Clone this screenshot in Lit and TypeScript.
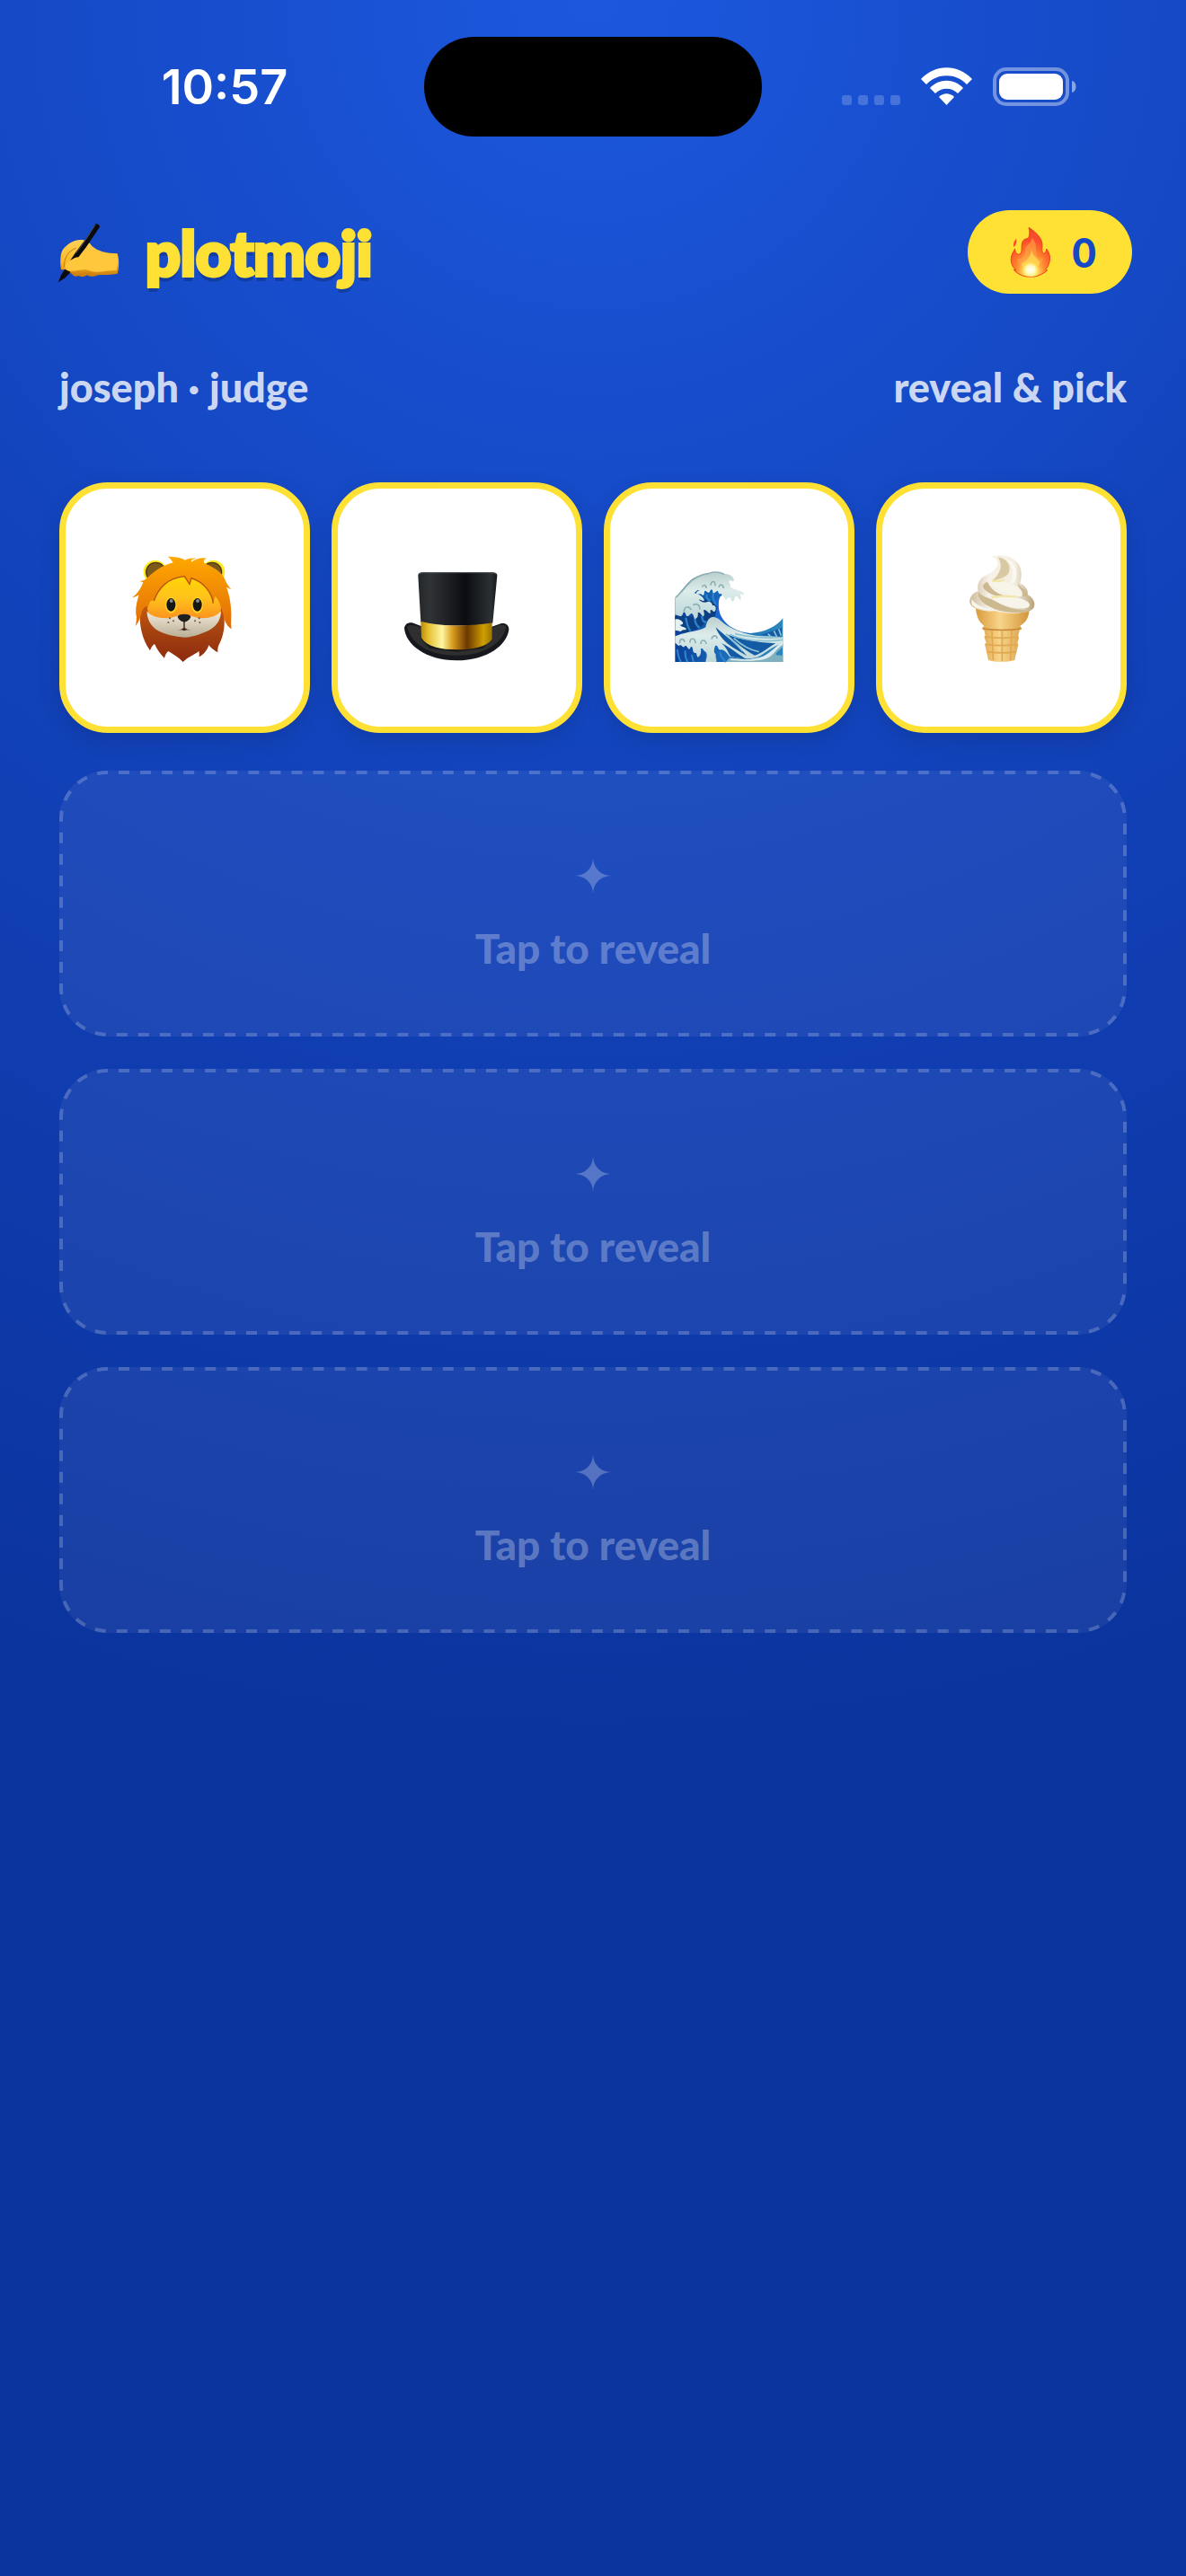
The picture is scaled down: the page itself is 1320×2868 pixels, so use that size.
import { LitElement, html, css, svg } from 'lit';
import { customElement, property, state } from 'lit/decorators.js';

const lion = svg`
  <defs>
    <linearGradient id="mane" x1="0" y1="0" x2="0" y2="1">
      <stop offset="0" stop-color="#ffa800" />
      <stop offset="1" stop-color="#e06a08" />
    </linearGradient>
    <linearGradient id="beard" x1="0" y1="0" x2="0" y2="1">
      <stop offset="0" stop-color="#d96a10" />
      <stop offset="0.55" stop-color="#a8440f" />
      <stop offset="1" stop-color="#8c2b10" />
    </linearGradient>
    <linearGradient id="face" x1="0" y1="0" x2="0" y2="1">
      <stop offset="0" stop-color="#ffd900" />
      <stop offset="0.5" stop-color="#ffc21c" />
      <stop offset="1" stop-color="#fb8a1e" />
    </linearGradient>
    <linearGradient id="muzzle" x1="0" y1="0" x2="0" y2="1">
      <stop offset="0" stop-color="#f3eadb" />
      <stop offset="1" stop-color="#b9ae95" />
    </linearGradient>
  </defs>
  <path fill="url(#beard)" d="M330 400C312 450 312 510 320 545C326 572 336 594 349 612C352 602 357 594 364 590C372 608 384 624 397 637C400 626 404 618 410 614C426 624 444 634 459 650C474 634 494 628 512 614C514 622 514 628 512 633C526 628 540 612 545 594C554 604 564 613 575 618C574 604 577 594 582 586C594 562 600 530 596 490L590 400Z" />
  <circle cx="366" cy="349" r="39" fill="#ffe81c" />
  <circle cx="560" cy="349" r="39" fill="#ffe81c" />
  <circle cx="368" cy="350" r="32" fill="#7d5a1c" stroke="#4e3a12" stroke-width="4" />
  <circle cx="556" cy="350" r="32" fill="#7d5a1c" stroke="#4e3a12" stroke-width="4" />
  <path fill="url(#face)" d="M340 470C344 400 390 352 462 352C536 352 580 400 586 470C584 498 560 516 462 518C366 516 342 498 340 470Z" />
  <path fill="url(#muzzle)" d="M339 480C350 500 392 508 420 502C440 498 448 492 462 492C478 492 486 498 506 502C534 508 572 500 586 480C586 506 574 530 546 544C520 556 496 566 464 568C432 566 400 558 376 546C350 530 338 506 339 480Z" />
  <path fill="url(#mane)" d="M314 380L326 384C318 406 306 424 290 434C298 434 306 430 312 426C304 450 298 480 304 500C304 512 302 522 300 530C310 520 318 500 322 480C330 464 338 460 342 470C346 450 352 440 362 446C376 404 410 368 464 364L481 390L487 370C530 384 556 420 560 454L566 430C584 446 590 480 600 516C606 526 612 536 621 540C618 526 620 514 620 490C620 460 614 424 604 400L620 408C610 396 604 386 600 376C590 350 562 334 530 320C526 312 530 306 538 304C520 300 500 306 488 316C482 308 496 306 504 304C488 302 474 304 466 310C452 300 430 298 408 298C416 302 420 310 426 318C400 324 370 340 334 374C326 378 318 380 314 380Z" />
  <path fill="none" stroke="#b7500a" stroke-width="4" d="M362 446C376 404 410 368 464 364L481 390L487 370C530 384 556 420 560 454" />
  <ellipse cx="419" cy="460" rx="19" ry="27" fill="#ffd51d" />
  <ellipse cx="507" cy="460" rx="19" ry="27" fill="#ffd51d" />
  <ellipse cx="419" cy="459" rx="15" ry="22" fill="#161616" />
  <ellipse cx="507" cy="459" rx="15" ry="22" fill="#161616" />
  <ellipse cx="420" cy="446" rx="6" ry="6" fill="#8a8a8a" />
  <ellipse cx="508" cy="446" rx="6" ry="6" fill="#8a8a8a" />
  <path fill="#1f1f1f" d="M441 498C446 488 480 488 485 498C484 508 472 516 463 517C454 516 442 508 441 498Z" />
  <path fill="none" stroke="#2a2018" stroke-width="4" d="M463 515V536" />
  <path fill="#4a2418" d="M441 544Q452 542 463 535Q474 542 486 544Q463 540 441 544ZM452 542L474 542L463 546Z" />
  <g fill="#6b5b44">
    <circle cx="415" cy="504" r="3" /><circle cx="427" cy="513" r="3" /><circle cx="410" cy="518" r="3" />
    <circle cx="513" cy="504" r="3" /><circle cx="499" cy="513" r="3" /><circle cx="515" cy="518" r="3" />
  </g>
`;

const hat = svg`
  <defs>
    <linearGradient id="felt">
      <stop offset="0" stop-color="#25282b" />
      <stop offset="0.15" stop-color="#303336" />
      <stop offset="0.6" stop-color="#0b0c12" />
      <stop offset="0.92" stop-color="#2c3032" />
      <stop offset="1" stop-color="#16181b" />
    </linearGradient>
    <linearGradient id="band">
      <stop offset="0" stop-color="#b98a06" />
      <stop offset="0.1" stop-color="#e5bd2c" />
      <stop offset="0.3" stop-color="#fff6a2" />
      <stop offset="0.45" stop-color="#d79a1c" />
      <stop offset="0.65" stop-color="#6b3800" />
      <stop offset="0.88" stop-color="#cf9f00" />
      <stop offset="1" stop-color="#9c7300" />
    </linearGradient>
  </defs>
  <path fill="#17191f" d="M268 537C270 522 284 516 298 520L330 532H560L590 522C606 518 618 528 617 542C612 590 550 645 442 645C340 645 272 592 268 537Z" />
  <path fill="#2f2f30" d="M278 532C284 524 304 526 324 536V574L352 604L444 616L530 604L560 574V536C580 526 600 522 608 532C596 590 530 628 444 628C352 628 290 590 278 532Z" />
  <path fill="url(#felt)" d="M314 362C314 352 322 350 334 350H556C570 350 578 352 578 362L563 520C500 532 380 532 323 518Z" />
  <path fill="none" stroke="#55595c" stroke-width="3" d="M318 356Q322 352 334 352H556Q570 352 574 356" />
  <path fill="url(#band)" d="M323 514C380 532 500 532 561 519V574C544 598 500 609 444 609C390 609 344 600 325 570Z" />
`;

const wave = svg`
  <defs>
    <linearGradient id="sea" x1="0" y1="0" x2="1" y2="0">
      <stop offset="0" stop-color="#0b3f96" />
      <stop offset="0.4" stop-color="#1768b8" />
      <stop offset="1" stop-color="#2c87bd" />
    </linearGradient>
    <linearGradient id="foam" x1="0" y1="0" x2="0" y2="1">
      <stop offset="0" stop-color="#b9cfcd" />
      <stop offset="0.4" stop-color="#dcecea" />
      <stop offset="1" stop-color="#bcd6d9" />
    </linearGradient>
  </defs>
  <path fill="url(#sea)" d="M270 440C290 420 310 390 330 375C370 360 420 370 440 390L426 432C410 440 410 480 424 502C440 534 480 556 522 558C570 556 610 534 630 508V654H270Z" />
  <path fill="#0d3f83" d="M340 416C350 440 366 446 390 448L410 470L404 500L380 512L356 538L306 558L270 550V500L330 504Z" />
  <path fill="none" stroke="#2b83cb" stroke-width="7" d="M376 428C372 440 378 446 388 450M398 424C392 446 402 456 408 462M306 506C310 530 314 544 322 550M336 508C336 528 346 536 352 540M360 500C360 516 366 522 374 520" />
  <path fill="#1c63d8" d="M418 440C408 480 426 530 470 550C440 544 414 520 404 500C414 480 408 456 404 446Z" />
  <path fill="url(#foam)" d="M270 438C290 424 300 408 312 396C330 374 352 362 384 358C400 350 420 352 434 360C452 360 466 368 467 382C462 390 456 376 450 384C450 394 458 392 454 404C468 412 486 414 498 422C502 432 494 434 490 426C484 428 494 440 488 446C480 444 482 434 474 434C466 436 472 448 462 452C454 448 458 438 450 438C442 440 446 446 438 446C434 438 430 430 424 426C416 430 416 422 412 416C404 418 402 428 396 422C396 408 388 410 386 420C378 426 376 416 370 416C364 422 372 430 362 432C356 424 350 428 344 428C336 422 346 418 352 414C344 412 338 420 334 424C352 428 362 436 368 448C362 454 356 444 350 446C358 454 370 458 380 452C390 452 396 460 394 466C402 462 410 470 404 484C396 490 396 478 390 480C384 484 392 490 386 492C378 488 374 478 366 480C364 488 372 496 364 502C356 496 352 484 346 490C348 500 344 510 336 510C330 504 334 494 324 492C316 496 316 504 308 500C304 492 304 486 298 488C294 498 292 504 284 500L270 496Z" />
  <path fill="url(#foam)" d="M270 568C310 552 350 552 372 538C376 520 382 506 394 504C410 504 418 512 432 524C458 544 500 562 556 568L630 570V590C590 604 560 634 540 640C510 646 470 640 452 636C440 620 430 610 420 614C410 608 414 596 404 600C400 612 398 622 406 628C404 640 410 644 408 654H372C374 640 380 630 372 620C362 616 364 606 356 610C358 622 354 636 346 638C340 630 344 622 336 624C326 620 332 604 324 602C318 608 320 614 314 610C310 600 304 596 300 604C294 606 292 596 286 598C280 604 276 592 270 590Z" />
  <path fill="#e2f0f0" d="M270 512C280 508 290 514 294 520C300 524 294 532 286 530C292 538 304 536 308 544C304 550 296 544 292 550C286 556 280 546 270 550Z" />
  <path fill="none" stroke="#8fb0b4" stroke-width="5" d="M272 438C290 424 300 408 312 396C330 374 352 362 384 358C400 352 420 354 434 361M300 486C300 470 316 464 324 480M330 464C344 456 354 466 352 478M360 404C366 394 374 396 374 408M388 398C392 382 404 380 404 400M416 404C420 392 430 394 432 408M286 592C284 574 300 574 302 588M320 590C318 572 338 572 338 592M356 594C356 578 372 578 374 594M392 578C396 562 410 564 410 576" />
  <path fill="#135ca5" d="M406 538C440 570 480 596 510 634L460 604C440 590 414 566 406 538ZM442 562C490 580 550 590 606 592C580 606 560 626 536 632C500 614 470 586 442 562ZM424 592C450 600 480 630 510 646L458 636C446 628 446 606 424 592ZM556 564L626 540V570Z" />
  <path fill="none" stroke="#8fc2d3" stroke-width="5" d="M452 562C500 584 560 588 630 580M470 560C520 572 570 576 630 572M466 574C494 600 520 614 550 620M440 560C460 580 480 600 496 618M580 560L592 572M600 550L610 570M616 544L624 566" />
  <path fill="#7fb0bf" d="M452 640C500 648 540 644 570 634C590 628 610 600 630 588V602C610 624 590 632 630 632V654H440Z" />
  <path fill="#dcecee" d="M456 642C500 648 540 646 562 636C590 624 608 600 630 586V596C610 608 600 628 584 638C560 652 500 652 456 648Z" />
  <path fill="none" stroke="#2f86cf" stroke-width="6" d="M278 612Q280 640 290 654M304 616Q302 636 312 654M326 630Q328 644 332 654M420 622Q424 640 440 654" />
`;

const cone = svg`
  <defs>
    <linearGradient id="wafer">
      <stop offset="0" stop-color="#d99a3c" />
      <stop offset="0.45" stop-color="#f8d58a" />
      <stop offset="1" stop-color="#d3943a" />
    </linearGradient>
    <linearGradient id="cream">
      <stop offset="0" stop-color="#cdb99a" />
      <stop offset="0.3" stop-color="#f7f2e9" />
      <stop offset="0.7" stop-color="#f3eee0" />
      <stop offset="1" stop-color="#b8a078" />
    </linearGradient>
  </defs>
  <path fill="url(#wafer)" d="M376 474H555C554 506 544 522 524 533L530 542L522 548L517 570L520 574L515 592L518 596L512 620L506 648C480 656 440 656 418 648L412 620L406 594L411 590L404 570L408 566L404 548L396 542L404 533C386 522 378 500 376 474Z" />
  <path fill="none" stroke="#c8883a" stroke-width="5" d="M400 543Q464 552 528 543" />
  <path fill="none" stroke="#e0a850" stroke-width="5" d="M406 570Q464 578 519 570M410 595Q464 603 516 595M413 620Q464 627 512 620M430 548L434 648M464 550V650M496 548L492 648" />
  <path fill="url(#cream)" d="M358 440C366 424 376 420 384 418C378 392 390 372 414 362C440 350 452 336 448 318C446 306 436 304 425 303C470 288 514 306 526 342C530 360 528 376 524 392C540 398 552 412 550 430C562 436 574 450 572 464C570 478 558 486 534 488C500 496 460 488 440 484C410 486 380 480 366 470C354 460 354 450 358 440Z" />
  <path fill="#d8c9a2" d="M450 304C486 310 496 340 484 360C472 374 450 378 430 384C450 366 472 340 450 304Z" />
  <path fill="#fbf8f1" d="M468 304C500 314 520 340 510 376C506 388 500 394 490 392C510 360 498 322 468 304Z" />
  <path fill="#ccb98f" d="M416 388C426 412 450 430 484 436C450 440 410 424 400 404C400 394 408 388 416 388ZM384 420C400 440 430 440 462 462C500 482 540 476 552 486C500 494 450 486 420 468C396 456 382 440 384 420ZM516 392C530 410 550 412 548 436L530 434C540 420 520 410 516 392Z" />
  <path fill="#f7f5ea" d="M424 388C450 384 480 386 500 396C520 404 536 418 530 434C500 440 450 420 424 388ZM426 440C470 430 520 436 548 452C566 464 552 480 520 474C490 470 450 460 426 440ZM362 444C376 464 400 472 430 480C400 482 370 476 362 460Z" />
  <path fill="none" stroke="#f1e6a8" stroke-width="7" d="M430 382Q456 388 472 378M428 438Q470 432 512 436" />
`;

const hand = svg`
  <defs>
    <linearGradient id="skin" x1="0" y1="0" x2="0" y2="1">
      <stop offset="0" stop-color="#ffd257" />
      <stop offset="0.6" stop-color="#fcb928" />
      <stop offset="1" stop-color="#c87a0c" />
    </linearGradient>
  </defs>
  <path fill="url(#skin)" d="M54 220C50 190 52 164 60 152C76 132 100 118 124 120C140 122 150 130 158 142C176 158 204 166 242 166C248 186 248 214 242 233C222 238 196 236 176 238C164 244 150 244 140 238C130 246 118 244 112 240C102 246 94 240 88 232C78 232 70 226 66 220Z" />
  <path fill="#ffc73b" d="M68 206C74 190 92 182 108 176C120 160 140 148 158 152C176 164 204 168 238 170C244 190 242 210 238 222C200 222 180 232 152 224C130 214 110 224 90 224C76 224 66 218 68 206Z" />
  <path fill="none" stroke="#c77c12" stroke-width="3" d="M64 210C64 180 78 156 104 148M90 228Q98 240 104 230M112 228Q120 244 130 228M134 228Q142 240 152 230" />
  <path fill="#0b0b0d" d="M168 68C174 64 184 70 183 77L138 144L112 178C102 178 92 184 84 190L104 160L140 112Z" />
  <path fill="none" stroke="#55575c" stroke-width="3" d="M168 70L132 126L104 164" />
  <path fill="#0b0b0d" d="M66 218L86 228L66 248L44 262L54 238Z" />
`;

const flame = svg`
  <defs>
    <radialGradient id="fire" cx="0.5" cy="0.9" r="0.85">
      <stop offset="0" stop-color="#fff8b0" />
      <stop offset="0.18" stop-color="#ffe45c" />
      <stop offset="0.42" stop-color="#ff8a30" />
      <stop offset="0.75" stop-color="#fb4f2a" />
      <stop offset="1" stop-color="#f04a34" />
    </radialGradient>
    <radialGradient id="glow">
      <stop offset="0" stop-color="#fffff0" />
      <stop offset="0.5" stop-color="#fffbc4" />
      <stop offset="1" stop-color="#ffe84a" stop-opacity="0" />
    </radialGradient>
  </defs>
  <path fill="#f4502c" d="M211 138C212 150 210 160 202 166C198 154 204 144 211 138Z" />
  <path fill="url(#fire)" stroke="#f03c18" stroke-width="3" d="M252 101C276 116 296 136 297 158C297 172 294 182 302 188C310 186 310 178 311 172C320 184 324 196 322 210C320 226 314 236 308 240L314 244C300 256 280 266 258 266C236 266 212 256 202 242L210 244C198 234 192 220 193 204C194 190 202 180 206 172C206 184 212 192 222 190C232 186 226 164 230 152C232 142 240 138 250 138C256 126 256 114 252 101Z" />
  <path fill="#ffa347" d="M262 136C282 152 274 176 278 192C282 204 294 206 300 202C296 232 280 248 258 248C236 248 218 232 214 206C226 208 240 196 240 178C240 156 262 158 262 136Z" opacity="0.6" />
  <path fill="#ffd84d" d="M262 172C262 192 278 204 288 214C288 236 276 252 258 252C240 252 228 240 228 220C244 216 260 196 262 172Z" opacity="0.8" />
  <ellipse cx="258" cy="242" rx="30" ry="28" fill="url(#glow)" />
`;

@customElement('reveal-slot')
class RevealSlot extends LitElement {
  @property({ type: String }) label = 'Tap to reveal';

  static styles = css`
    :host {
      display: block;
    }

    .slot {
      position: relative;
      display: flex;
      flex-direction: column;
      align-items: center;
      justify-content: center;
      gap: 22px;
      width: 100%;
      padding: 88px 24px 70px;
      border: 0;
      border-radius: 54px;
      background: rgba(255, 255, 255, 0.06);
      color: rgba(255, 255, 255, 0.3);
      font-family: Lato, "Open Sans", sans-serif;
      font-size: 46px;
      font-weight: 900;
      line-height: 56px;
      cursor: pointer;
    }

    .outline {
      position: absolute;
      inset: 0;
      width: 100%;
      height: 100%;
    }

    .outline rect {
      x: 2px;
      y: 2px;
      width: calc(100% - 4px);
      height: calc(100% - 4px);
      rx: 52px;
      fill: none;
      stroke: rgba(255, 255, 255, 0.2);
      stroke-width: 4px;
      stroke-dasharray: 12 12;
      stroke-dashoffset: 12;
    }

    .star {
      font-family: "DejaVu Sans", sans-serif;
      font-size: 52px;
      font-weight: 400;
      line-height: 60px;
      color: rgba(255, 255, 255, 0.25);
    }
  `;

  render() {
    return html`
      <button class="slot" type="button">
        <svg class="outline" aria-hidden="true"><rect pathLength="2856" /></svg>
        <span class="star" aria-hidden="true">✦</span>
        <span>${this.label}</span>
      </button>
    `;
  }
}

@customElement('app-root')
class AppRoot extends LitElement {
  @state() private streak = 0;

  private cards = [
    { name: 'lion', box: '286 290 360 360', art: lion },
    { name: 'top hat', box: '265 290 360 360', art: hat },
    { name: 'wave', box: '272 294 360 360', art: wave },
    { name: 'ice cream', box: '283 294 360 360', art: cone },
  ];

  static styles = css`
    :host {
      display: block;
      min-height: 100vh;
      background: radial-gradient(circle at 50% 0, #1c58de 0, #1242ba 936px, #0b349e 1920px);
      font-family: Lato, "Open Sans", sans-serif;
      color: #fff;
    }

    svg {
      display: block;
      overflow: visible;
    }

    .status {
      display: grid;
      grid-template-columns: 1fr 376px 1fr;
      align-items: center;
      padding-top: 41px;
    }

    .time {
      padding-left: 28px;
      text-align: center;
      font-family: Inter, sans-serif;
      font-size: 54px;
      font-weight: 600;
      line-height: 64px;
    }

    .island {
      height: 111px;
      border-radius: 56px;
      background: #000;
    }

    .icons {
      display: flex;
      justify-content: center;
      padding-right: 32px;
    }

    .top {
      display: flex;
      align-items: center;
      justify-content: space-between;
      padding: 82px 60px 0 66px;
    }

    .brand {
      display: flex;
      align-items: center;
      gap: 28px;
    }

    .title {
      margin: 0;
      color: #ffe135;
      font-size: 68px;
      font-weight: 900;
      line-height: 76px;
      -webkit-text-stroke: 4px #ffe135;
      text-shadow: 0 6px 0 rgba(0, 0, 0, 0.2);
    }

    .streak {
      display: flex;
      align-items: center;
      gap: 16px;
      height: 93px;
      padding: 0 40px;
      border-radius: 47px;
      background: #ffe135;
      color: #1549c6;
      font-size: 46px;
      font-weight: 900;
      line-height: 56px;
    }

    main {
      display: flex;
      flex-direction: column;
      padding: 76px 66px;
    }

    .round {
      display: flex;
      justify-content: space-between;
      color: rgba(255, 255, 255, 0.8);
      font-size: 45px;
      font-weight: 900;
      line-height: 56px;
    }

    .cards {
      display: grid;
      grid-template-columns: repeat(4, 1fr);
      gap: 24px;
      margin: 78px 0 42px;
      padding: 0;
      list-style: none;
    }

    .card {
      display: flex;
      align-items: center;
      justify-content: center;
      box-sizing: border-box;
      aspect-ratio: 1;
      border: 7px solid #ffe135;
      border-radius: 54px;
      background: #fff;
      box-shadow: 0 8px 24px rgba(0, 0, 0, 0.12);
    }

    .slots {
      display: flex;
      flex-direction: column;
      gap: 36px;
    }
  `;

  render() {
    return html`
      <div class="status">
        <div class="time">10:57</div>
        <div class="island"></div>
        <div class="icons">
          <svg width="262" height="44" viewBox="0 0 262 44" fill="#fff" aria-hidden="true">
            <g opacity="0.2">
              <rect x="0" y="31" width="11" height="11" rx="3" />
              <rect x="18" y="31" width="11" height="11" rx="3" />
              <rect x="36" y="31" width="11" height="11" rx="3" />
              <rect x="54" y="31" width="11" height="11" rx="3" />
            </g>
            <path d="M88 13C104 -4 129 -4 145 13L139 19C127 6 106 6 94 19Z" />
            <path d="M98 23C108 12 125 12 135 23L129 29C122 22 111 22 104 29Z" />
            <path d="M108 33C113 28 120 28 125 33L116.500 42Z" />
            <rect x="170" y="2" width="81" height="39" rx="13" fill="none" stroke="#fff" stroke-width="4" opacity="0.4" />
            <rect x="175" y="7" width="71" height="29" rx="9" />
            <path opacity="0.5" d="M256 15C262 16 262 27 256 28Z" />
          </svg>
        </div>
      </div>

      <header class="top">
        <div class="brand">
          <svg width="68" height="68" viewBox="48 60 204 204" aria-hidden="true">${hand}</svg>
          <h1 class="title">plotmoji</h1>
        </div>
        <div class="streak">
          <svg width="60" height="60" viewBox="168 94 180 180" aria-hidden="true">${flame}</svg>
          <span>${this.streak}</span>
        </div>
      </header>

      <main>
        <div class="round">
          <span>joseph · judge</span>
          <span>reveal &amp; pick</span>
        </div>
        <ul class="cards">
          ${this.cards.map(card => html`
            <li class="card">
              <svg width="120" height="120" viewBox=${card.box} role="img" aria-label=${card.name}>${card.art}</svg>
            </li>
          `)}
        </ul>
        <div class="slots">
          <reveal-slot></reveal-slot>
          <reveal-slot></reveal-slot>
          <reveal-slot></reveal-slot>
        </div>
      </main>
    `;
  }
}
